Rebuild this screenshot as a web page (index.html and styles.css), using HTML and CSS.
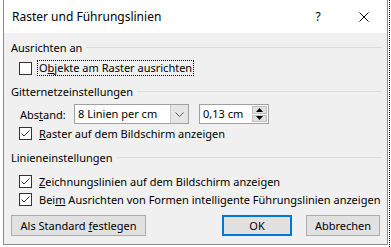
FILE: index.html
```html
<!DOCTYPE html>
<html lang="de">
<head>
    <meta charset="UTF-8">
    <title>Raster und Führungslinien</title>
    <link rel="stylesheet" href="styles.css">
</head>
<body>
    <div class="stage">
        <div class="dialog">
            <div class="titlebar">
                <span class="title">Raster und Führungslinien</span>
                <span class="caption-btn">?</span>
                <span class="caption-btn">
                    <svg width="10" height="10" viewBox="0 0 10 10"><path d="M0.5 0.5 L9.5 9.5 M9.5 0.5 L0.5 9.5" stroke="#000" stroke-width="1" fill="none"/></svg>
                </span>
            </div>

            <div class="content">
                <div class="group-head"><span>Ausrichten an</span><span class="rule"></span></div>
                <div class="check-row row1">
                    <span class="box"></span>
                    <span class="label focus">O<u>b</u>jekte am Raster ausrichten</span>
                </div>

                <div class="group-head gh2"><span>Gitternetzeinstellungen</span><span class="rule"></span></div>
                <div class="field-row">
                    <span class="field-label">Abs<u>t</u>and:</span>
                    <div class="combo">
                        <span class="combo-text">8 Linien per cm</span>
                        <span class="combo-btn">
                            <svg width="9" height="5" viewBox="0 0 9 5"><path d="M0.5 0.5 L4.5 4.5 L8.5 0.5" stroke="#555" stroke-width="1" fill="none"/></svg>
                        </span>
                    </div>
                    <div class="spin">
                        <span class="spin-text">0,13 cm</span>
                        <span class="spin-btns">
                            <span class="spin-btn"><svg width="7" height="4" viewBox="0 0 7 4"><path d="M0 4 L3.5 0 L7 4 Z" fill="#000"/></svg></span>
                            <span class="spin-btn"><svg width="7" height="4" viewBox="0 0 7 4"><path d="M0 0 L3.5 4 L7 0 Z" fill="#000"/></svg></span>
                        </span>
                    </div>
                </div>
                <div class="check-row">
                    <span class="box checked"><svg width="11" height="11" viewBox="0 0 11 11"><path d="M1.5 5.5 L4 8 L9.5 2.5" stroke="#333" stroke-width="1" fill="none"/></svg></span>
                    <span class="label"><u>R</u>aster auf dem Bildschirm anzeigen</span>
                </div>

                <div class="group-head gh3"><span>Linieneinstellungen</span><span class="rule"></span></div>
                <div class="check-row row3">
                    <span class="box checked"><svg width="11" height="11" viewBox="0 0 11 11"><path d="M1.5 5.5 L4 8 L9.5 2.5" stroke="#333" stroke-width="1" fill="none"/></svg></span>
                    <span class="label"><u>Z</u>eichnungslinien auf dem Bildschirm anzeigen</span>
                </div>
                <div class="check-row">
                    <span class="box checked"><svg width="11" height="11" viewBox="0 0 11 11"><path d="M1.5 5.5 L4 8 L9.5 2.5" stroke="#333" stroke-width="1" fill="none"/></svg></span>
                    <span class="label">Bei<u>m</u> Ausrichten von Formen intelligente Führungslinien anzeigen</span>
                </div>

                <div class="buttons">
                    <button class="btn wide">Als Standard <u>f</u>estlegen</button>
                    <span class="spacer"></span>
                    <button class="btn ok">OK</button>
                    <button class="btn cancel">Abbrechen</button>
                </div>
            </div>
        </div>
        <div class="guide"></div>
    </div>
</body>
</html>
```

FILE: styles.css
```css
body {
    margin: 0;
    padding: 0 0 0 3px;
    background: #fff;
    font-family: "Noto Sans", sans-serif;
    font-size: 11px;
    color: #000;
    white-space: nowrap;
}
.stage {
    display: flex;
    gap: 1px;
    height: 247px;
}
.guide {
    border-left: 1px dotted #000;
    height: 247px;
}
.dialog {
    width: 383px;
    height: 244px;
    border: 1px solid #8c8c8c;
    border-top: none;
    background: #f0f0f0;
    display: flex;
    flex-direction: column;
}
.titlebar {
    height: 33px;
    background: #fff;
    display: flex;
    align-items: center;
    padding-left: 8px;
    font-size: 12px;
}
.title {
    flex: 1;
}
.caption-btn {
    width: 46px;
    height: 33px;
    display: flex;
    align-items: center;
    justify-content: center;
}
.content {
    padding: 5px 5px 0 7px;
    display: flex;
    flex-direction: column;
}
.group-head {
    height: 18px;
    display: flex;
    align-items: center;
    gap: 4px;
}
.group-head .rule {
    flex: 1;
    border-top: 1px solid #dcdcdc;
}
.gh2 { margin-top: 4px; }
.gh3 { margin-top: 6px; }
.check-row {
    height: 18px;
    display: flex;
    align-items: center;
    padding-left: 8px;
}
.row1 {
    height: 20px;
    margin-top: 2px;
}
.row3 { margin-top: 6px; }
.box {
    width: 11px;
    height: 11px;
    border: 1px solid #333;
    background: #fff;
    display: flex;
}
.label {
    margin-left: 5px;
    padding: 0 1px;
    border: 1px solid transparent;
}
.label.focus {
    border: 1px dotted #000;
    line-height: 14px;
}
.field-row {
    height: 20px;
    margin-top: 4px;
    display: flex;
    align-items: center;
    padding-left: 9px;
}
.field-label {
    width: 54px;
}
.combo {
    width: 113px;
    height: 18px;
    border: 1px solid #a0a0a0;
    background: #fff;
    display: flex;
}
.combo-text {
    flex: 1;
    padding-left: 3px;
    line-height: 18px;
}
.combo-btn {
    width: 17px;
    background: #e5e5e5;
    border-left: 1px solid #c8c8c8;
    display: flex;
    align-items: center;
    justify-content: center;
}
.spin {
    margin-left: 10px;
    width: 68px;
    height: 18px;
    border: 1px solid #a0a0a0;
    background: #fff;
    display: flex;
}
.spin-text {
    flex: 1;
    padding-left: 3px;
    line-height: 18px;
}
.spin-btns {
    width: 15px;
    display: flex;
    flex-direction: column;
    padding: 1px 1px 1px 0;
    gap: 1px;
}
.spin-btn {
    flex: 1;
    background: #e1e1e1;
    border: 1px solid #c0c0c0;
    display: flex;
    align-items: center;
    justify-content: center;
}
.buttons {
    margin-top: 7px;
    display: flex;
    gap: 14px;
}
.spacer {
    flex: 1;
    margin-left: -14px;
}
.btn {
    height: 21px;
    padding: 0;
    background: #e1e1e1;
    border: 1px solid #adadad;
    font-family: inherit;
    font-size: 11px;
    color: #000;
}
.wide { width: 135px; }
.ok {
    width: 70px;
    border: 2px solid #0078d7;
}
.cancel {
    width: 74px;
    margin-right: 2px;
}
```
